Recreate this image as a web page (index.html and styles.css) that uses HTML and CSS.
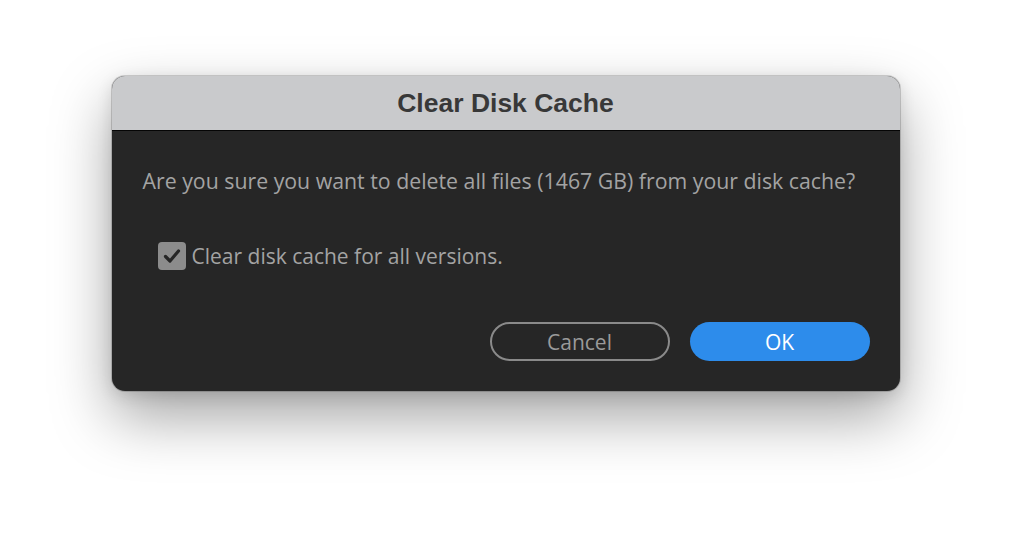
FILE: index.html
```html
<!DOCTYPE html>
<html lang="en">
<head>
  <meta charset="UTF-8">
  <meta name="viewport" content="width=device-width, initial-scale=1.0">
  <title>Clear Disk Cache</title>
  <link rel="stylesheet" href="styles.css">
</head>
<body>
  <div id="dialog">
    <div id="titlebar">Clear Disk Cache</div>
    <div id="content">
      <p class="message">Are you sure you want to delete all files (1467 GB) from your disk cache?</p>
      <label class="option">
        <span class="checkbox">
          <svg width="20" height="20" viewBox="0 0 20 20">
            <path d="M3.5 10.5 L8 15 L16.5 5" fill="none" stroke="#262626" stroke-width="3.2" stroke-linecap="round" stroke-linejoin="round"/>
          </svg>
        </span>
        Clear disk cache for all versions.
      </label>
      <div class="buttons">
        <button class="btn cancel">Cancel</button>
        <button class="btn ok">OK</button>
      </div>
    </div>
  </div>
</body>
</html>
```

FILE: styles.css
```css
body {
  margin: 0;
  height: 540px;
  background: #ffffff;
  font-family: "Open Sans", "Noto Sans", sans-serif;
  display: flex;
  justify-content: center;
  align-items: flex-start;
}

#dialog {
  margin-top: 76px;
  margin-right: 1px;
  width: 788px;
  border-radius: 13px;
  overflow: hidden;
  background-color: #262626;
  box-shadow: 0 0 0 1px rgba(0, 0, 0, 0.16), 0 26px 60px rgba(0, 0, 0, 0.36), 0 4px 16px rgba(0, 0, 0, 0.12);
}

#titlebar {
  height: 55px;
  background-color: #c9cacc;
  border-bottom: 1px solid #050505;
  color: #383838;
  font-family: "Liberation Sans", Arial, sans-serif;
  font-weight: bold;
  font-size: 26.5px;
  display: flex;
  justify-content: center;
  align-items: center;
  padding-top: 1px;
  box-sizing: border-box;
}

#content {
  padding: 36px 30px 30px 31px;
}

.message {
  margin: 0;
  color: #a3a3a3;
  font-size: 21.3px;
  line-height: 28px;
}

.option {
  display: flex;
  align-items: center;
  gap: 6px;
  margin: 47px 0 0 15px;
  color: #a3a3a3;
  font-size: 21px;
  line-height: 28px;
}

.checkbox {
  width: 28px;
  height: 28px;
  border-radius: 4px;
  background-color: #8c8c8c;
  display: flex;
  justify-content: center;
  align-items: center;
}

.buttons {
  display: flex;
  justify-content: flex-end;
  gap: 20px;
  margin-top: 52px;
}

.btn {
  width: 180px;
  height: 39px;
  border-radius: 20px;
  font-family: "Open Sans", "Noto Sans", sans-serif;
  font-size: 21px;
  cursor: pointer;
}

.cancel {
  background: transparent;
  border: 2px solid #8a8a8a;
  color: #9a9a9a;
}

.ok {
  background-color: #2d8ceb;
  border: none;
  color: #ffffff;
}
```
